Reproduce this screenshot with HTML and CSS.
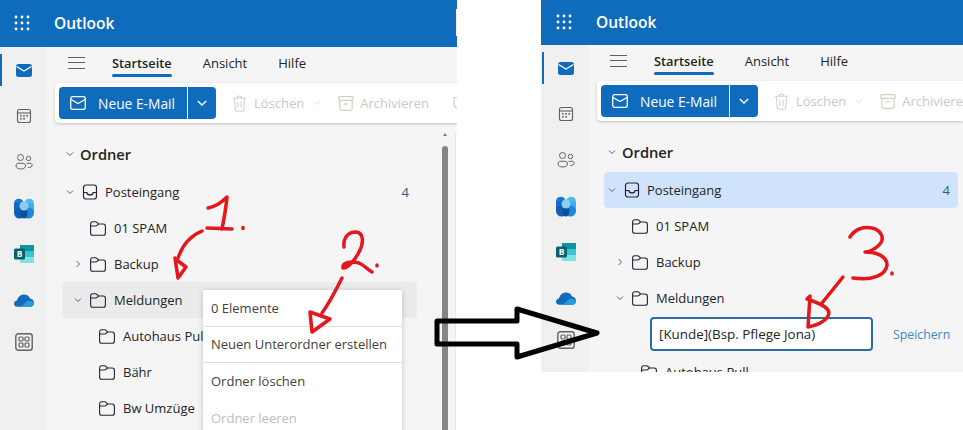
FILE: index.html
```html
<!DOCTYPE html>
<html lang="de">
<head>
<meta charset="utf-8">
<title>Outlook</title>
<link rel="stylesheet" href="styles.css">
</head>
<body>
<svg class="defs" width="0" height="0" aria-hidden="true">
  <symbol id="i-waffle" viewBox="0 0 16 16"><g fill="#fff"><circle cx="2" cy="2" r="1.4"/><circle cx="8" cy="2" r="1.4"/><circle cx="14" cy="2" r="1.4"/><circle cx="2" cy="8" r="1.4"/><circle cx="8" cy="8" r="1.4"/><circle cx="14" cy="8" r="1.4"/><circle cx="2" cy="14" r="1.4"/><circle cx="8" cy="14" r="1.4"/><circle cx="14" cy="14" r="1.4"/></g></symbol>
  <symbol id="i-mail" viewBox="0 0 16 13"><rect width="16" height="13" rx="2.5" fill="#0f6cbd"/><path d="M0.5 2.5 8 7l7.5-4.5" fill="none" stroke="#fff" stroke-width="1.3"/></symbol>
  <symbol id="i-cal" viewBox="0 0 16 16"><rect x="1.5" y="1.5" width="13" height="13" rx="2" fill="none" stroke="#616161" stroke-width="1.1"/><path d="M1.5 5h13" stroke="#616161" stroke-width="1.1"/><g fill="#616161"><rect x="4" y="7" width="1.6" height="1.6"/><rect x="7.2" y="7" width="1.6" height="1.6"/><rect x="10.4" y="7" width="1.6" height="1.6"/><rect x="4" y="10" width="1.6" height="1.6"/><rect x="7.2" y="10" width="1.6" height="1.6"/></g></symbol>
  <symbol id="i-people" viewBox="0 0 18 16"><g fill="none" stroke="#616161" stroke-width="1"><circle cx="5.5" cy="3.5" r="3"/><circle cx="13.5" cy="4.5" r="2.2"/><path d="M1 12c0-1.5.8-2.7 2-2.7h5.2c1.4 0 2.3 1.2 2.3 2.7 0 1.8-2.2 3-4.8 3S1 13.800 1 12z"/><path d="M11.500 9.300H15c1.200 0 2.200.8 2.200 1.900 0 1.500-1.700 2.300-4 2.300"/></g></symbol>
  <symbol id="i-copilot" viewBox="0 0 20 21"><circle cx="4.800" cy="5.500" r="4.800" fill="#1a78d2"/><circle cx="15.200" cy="5.500" r="4.800" fill="#4fbdf0"/><rect x="0" y="5" width="9" height="11" rx="3" fill="#1668c4"/><rect x="11" y="5" width="9" height="11" rx="3" fill="#3fb0ec"/><ellipse cx="5.500" cy="15" rx="5.500" ry="5.500" fill="#0f5fb5"/><ellipse cx="14.500" cy="15" rx="5.500" ry="5.500" fill="#1f86d8"/><ellipse cx="10" cy="15" rx="3.500" ry="5.500" fill="#0d4f9e"/><circle cx="10" cy="8" r="4.500" fill="#8ccdf0"/></symbol>
  <symbol id="i-bookings" viewBox="0 0 20 18"><rect x="6" y="0" width="14" height="6" fill="#12949e"/><rect x="6" y="6" width="14" height="6" fill="#37c6d0"/><rect x="6" y="12" width="14" height="6" fill="#7fe0e6"/><rect x="0" y="3.500" width="11" height="11" rx="1.500" fill="#04626e"/><text x="5.500" y="12" class="bookings-b">B</text></symbol>
  <symbol id="i-cloud" viewBox="0 0 20 13"><path d="M3.500 12.800C1.500 12.800 0 11.400 0 9.700 0 8 1.300 6.800 3 6.600 3.700 3 6.600.5 10 .5c2.800 0 5.100 1.600 6 4 2.200.2 4 2 4 4.200 0 2.300-1.800 4.100-4 4.100z" fill="#0f6cbd"/><path d="M7 12.800 12 8c1-1 2.500-1.400 4-1.200 2.300.3 4 1.700 4 3.200 0 1.600-1.500 2.800-4 2.800z" fill="#2a9be0"/></symbol>
  <symbol id="i-apps" viewBox="0 0 18 18"><rect x=".8" y=".8" width="16.400" height="16.400" rx="2.500" fill="none" stroke="#616161" stroke-width="1.400"/><g fill="none" stroke="#616161" stroke-width="1.200"><rect x="4" y="4" width="4" height="4" rx="1"/><rect x="10" y="4" width="4" height="4" rx="1"/><rect x="4" y="10" width="4" height="4" rx="1"/><rect x="10" y="10" width="4" height="4" rx="1"/></g></symbol>
  <symbol id="i-envelope" viewBox="0 0 16 14"><rect x=".7" y=".7" width="14.600" height="12.600" rx="2" fill="none" stroke="#fff" stroke-width="1.300"/><path d="M1 3.500 8 7.500l7-4" fill="none" stroke="#fff" stroke-width="1.300"/></symbol>
  <symbol id="i-chev" viewBox="0 0 10 10"><path d="M2 3.500 5 6.500l3-3" fill="none" stroke="currentColor" stroke-width="1"/></symbol>
  <symbol id="i-chevr" viewBox="0 0 10 10"><path d="M3.500 2 6.500 5l-3 3" fill="none" stroke="currentColor" stroke-width="1"/></symbol>
  <symbol id="i-trash" viewBox="0 0 16 18"><g fill="none" stroke="#cfcfcf" stroke-width="1.100"><path d="M1 3.500h14M5.500 3.500c0-1.500 1-2.500 2.500-2.500s2.500 1 2.500 2.500"/><path d="M2.500 3.500l1 12c.1 1 .8 1.700 1.800 1.700h5.400c1 0 1.700-.7 1.800-1.700l1-12"/><path d="M6.300 7v6.500M9.700 7v6.500"/></g></symbol>
  <symbol id="i-archive" viewBox="0 0 16 15"><g fill="none" stroke="#ccd6bb" stroke-width="1.200"><rect x=".7" y=".7" width="14.600" height="3.600" rx="1"/><path d="M1.800 4.300v8.200c0 1 .7 1.800 1.700 1.800h9c1 0 1.700-.8 1.700-1.800V4.300"/><path d="M6 8h4"/></g></symbol>
  <symbol id="i-shield" viewBox="0 0 16 15"><path d="M1 1.500h14v6c0 3.500-3 5.800-7 6.800-4-1-7-3.300-7-6.800z" fill="none" stroke="#e6c9c9" stroke-width="1.200"/></symbol>
  <symbol id="i-inbox" viewBox="0 0 16 16"><rect x="1.500" y="1" width="13" height="14" rx="2.500" fill="none" stroke="#2b2035" stroke-width="1.200"/><path d="M1.500 8.500h3.200c.4 1.500 1.700 2.400 3.300 2.400s2.900-.9 3.300-2.400h3.200" fill="none" stroke="#2b2035" stroke-width="1.200"/></symbol>
  <symbol id="i-folder" viewBox="0 0 16 15"><path d="M.6 3C.6 1.600 1.500.7 2.800.7h2.700c.6 0 1 .2 1.400.6L8.600 3h4.600c1.300 0 2.200.9 2.200 2.200v6.800c0 1.300-.9 2.300-2.200 2.300H2.800c-1.300 0-2.200-1-2.200-2.300zM.6 5h4.900c.6 0 1.100-.2 1.500-.6L8.600 3" fill="none" stroke="#2b2035" stroke-width="1.100"/></symbol>
</svg>

<section class="win win-left">
  <header class="topbar">
    <svg class="waffle"><use href="#i-waffle"/></svg>
    <span class="brand">Outlook</span>
    <span class="search-edge"></span>
  </header>
  <div class="win-body">
    <nav class="rail">
      <span class="rail-item rail-active"><svg class="ic-mail"><use href="#i-mail"/></svg></span>
      <span class="rail-item"><svg class="ic-16"><use href="#i-cal"/></svg></span>
      <span class="rail-item"><svg class="ic-people"><use href="#i-people"/></svg></span>
      <span class="rail-item"><svg class="ic-20"><use href="#i-copilot"/></svg></span>
      <span class="rail-item"><svg class="ic-book"><use href="#i-bookings"/></svg></span>
      <span class="rail-item"><svg class="ic-cloud"><use href="#i-cloud"/></svg></span>
      <span class="rail-item rail-apps"><svg class="ic-apps"><use href="#i-apps"/></svg></span>
    </nav>
    <main class="main">
      <div class="tabs">
        <span class="burger"></span>
        <span class="tab tab-on">Startseite</span>
        <span class="tab">Ansicht</span>
        <span class="tab">Hilfe</span>
      </div>
      <div class="ribbon">
        <span class="btn-new"><svg class="ic-env"><use href="#i-envelope"/></svg>Neue E-Mail</span>
        <span class="btn-drop"><svg class="ic-drop"><use href="#i-chev"/></svg></span>
        <span class="cmd cmd-del"><svg class="ic-trash"><use href="#i-trash"/></svg>Löschen<svg class="ic-cmdchev"><use href="#i-chev"/></svg></span>
        <span class="cmd cmd-arc"><svg class="ic-arc"><use href="#i-archive"/></svg>Archivieren</span>
        <span class="cmd cmd-sh"><svg class="ic-arc"><use href="#i-shield"/></svg></span>
      </div>
      <div class="pane">
        <div class="tree">
          <div class="row row-head"><svg class="chev"><use href="#i-chev"/></svg><span>Ordner</span></div>
          <div class="row"><svg class="chev"><use href="#i-chev"/></svg><svg class="ic-inbox"><use href="#i-inbox"/></svg><span>Posteingang</span><span class="count">4</span></div>
          <div class="row lvl1"><span class="chev"></span><svg class="ic-folder"><use href="#i-folder"/></svg><span>01 SPAM</span></div>
          <div class="row lvl1"><svg class="chev"><use href="#i-chevr"/></svg><svg class="ic-folder"><use href="#i-folder"/></svg><span>Backup</span></div>
          <div class="row lvl1 row-hover"><svg class="chev"><use href="#i-chev"/></svg><svg class="ic-folder"><use href="#i-folder"/></svg><span>Meldungen</span></div>
          <div class="row lvl2"><span class="chev"></span><svg class="ic-folder"><use href="#i-folder"/></svg><span>Autohaus Pull</span></div>
          <div class="row lvl2"><span class="chev"></span><svg class="ic-folder"><use href="#i-folder"/></svg><span>Bähr</span></div>
          <div class="row lvl2"><span class="chev"></span><svg class="ic-folder"><use href="#i-folder"/></svg><span>Bw Umzüge</span></div>
        </div>
        <div class="scroll"><span class="scroll-up"></span><span class="scroll-thumb"></span></div>
        <div class="next-pane"></div>
      </div>
    </main>
  </div>
  <div class="menu">
    <div class="menu-item menu-sep">0 Elemente</div>
    <div class="menu-item menu-sep">Neuen Unterordner erstellen</div>
    <div class="menu-item">Ordner löschen</div>
    <div class="menu-item menu-off">Ordner leeren</div>
  </div>
</section>

<section class="win win-right">
  <header class="topbar">
    <svg class="waffle"><use href="#i-waffle"/></svg>
    <span class="brand">Outlook</span>
  </header>
  <div class="win-body">
    <nav class="rail">
      <span class="rail-item rail-active"><svg class="ic-mail"><use href="#i-mail"/></svg></span>
      <span class="rail-item"><svg class="ic-16"><use href="#i-cal"/></svg></span>
      <span class="rail-item"><svg class="ic-people"><use href="#i-people"/></svg></span>
      <span class="rail-item"><svg class="ic-20"><use href="#i-copilot"/></svg></span>
      <span class="rail-item"><svg class="ic-book"><use href="#i-bookings"/></svg></span>
      <span class="rail-item"><svg class="ic-cloud"><use href="#i-cloud"/></svg></span>
      <span class="rail-item rail-apps"><svg class="ic-apps"><use href="#i-apps"/></svg></span>
    </nav>
    <main class="main">
      <div class="tabs">
        <span class="burger"></span>
        <span class="tab tab-on">Startseite</span>
        <span class="tab">Ansicht</span>
        <span class="tab">Hilfe</span>
      </div>
      <div class="ribbon">
        <span class="btn-new"><svg class="ic-env"><use href="#i-envelope"/></svg>Neue E-Mail</span>
        <span class="btn-drop"><svg class="ic-drop"><use href="#i-chev"/></svg></span>
        <span class="cmd cmd-del"><svg class="ic-trash"><use href="#i-trash"/></svg>Löschen<svg class="ic-cmdchev"><use href="#i-chev"/></svg></span>
        <span class="cmd cmd-arc"><svg class="ic-arc"><use href="#i-archive"/></svg>Archivieren</span>
      </div>
      <div class="pane">
        <div class="tree">
          <div class="row row-head"><svg class="chev"><use href="#i-chev"/></svg><span>Ordner</span></div>
          <div class="row row-sel"><svg class="chev"><use href="#i-chev"/></svg><svg class="ic-inbox"><use href="#i-inbox"/></svg><span>Posteingang</span><span class="count">4</span></div>
          <div class="row lvl1"><span class="chev"></span><svg class="ic-folder"><use href="#i-folder"/></svg><span>01 SPAM</span></div>
          <div class="row lvl1"><svg class="chev"><use href="#i-chevr"/></svg><svg class="ic-folder"><use href="#i-folder"/></svg><span>Backup</span></div>
          <div class="row lvl1"><svg class="chev"><use href="#i-chev"/></svg><svg class="ic-folder"><use href="#i-folder"/></svg><span>Meldungen</span></div>
          <div class="row row-input"><span class="input">[Kunde](Bsp. Pflege Jona)</span><span class="save">Speichern</span></div>
          <div class="row lvl2"><span class="chev"></span><svg class="ic-folder"><use href="#i-folder"/></svg><span>Autohaus Pull</span></div>
        </div>
      </div>
    </main>
  </div>
</section>

<svg class="marks" viewBox="0 0 963 430" aria-hidden="true">
  <path class="black" d="M437 321H517V309L597 333 517 357V344H437Z"/>
  <g class="red">
    <path d="M208 208C214 207 222 202 227 197 226 208 224 219 222 229"/>
    <path d="M207 228 232 229"/>
    <path d="M243 227.500v1"/>
    <path d="M202 231C190 236 182 246 178 258"/>
    <path d="M175 258 178 278 186 267 178 261"/>
    <path d="M344 247C343 239 347 232 356 232 364 233 364 243 359 252 355 260 348 268 343 268 342 262 352 261 359 263 364 265 368 270 372 272"/>
    <path d="M377 265v1"/>
    <path d="M342 278C336 290 330 302 322 313"/>
    <path d="M310 312 330 319 312 332Z"/>
    <path d="M850 237C855 229 864 226 872 228 881 230 885 238 880 244 875 250 868 252 865 252 876 252 887 256 887 265 886 275 872 281 853 278"/>
    <path d="M892 273v1"/>
    <path d="M843 277 822 303"/>
    <path d="M807 299 810 296 808 327C815 326 825 322 828 316 832 309 822 304 807 299"/>
  </g>
</svg>
</body>
</html>
```

FILE: styles.css
```css
* { box-sizing: border-box; }
html, body { margin: 0; padding: 0; }
body {
  width: 963px;
  height: 430px;
  background: #fff;
  display: flex;
  align-items: flex-start;
  gap: 84px;
  overflow: hidden;
  position: relative;
  font-family: "Open Sans", "Noto Sans", sans-serif;
  font-size: 13px;
  color: #242424;
}
.defs { position: absolute; }
.bookings-b { font: 700 8.5px "Open Sans", sans-serif; fill: #fff; text-anchor: middle; }

.win { position: relative; display: flex; flex-direction: column; overflow: hidden; }
.win-left { width: 457px; height: 430px; }
.win-right { width: 422px; height: 372px; }

.topbar { height: 47px; flex: none; background: #0f6cbd; display: flex; align-items: center; position: relative; padding: 0 0 2px 14px; }
.win-right .topbar { height: 45px; padding-left: 15px; }
.waffle { width: 16px; height: 16px; margin-right: 24px; }
.brand { color: #fff; font-size: 15.5px; font-weight: 600; }
.search-edge { margin-left: auto; width: 1px; height: 27px; background: #f1f1f1; }

.win-body { flex: 1; display: flex; min-height: 0; }
.rail { width: 47px; flex: none; background: #f0f0f0; display: flex; flex-direction: column; }
.win-right .rail { width: 48px; padding-left: 1px; }
.rail-item { height: 46px; flex: none; display: flex; align-items: center; justify-content: center; position: relative; }
.rail-apps { height: 38px; }
.rail-active::before { content: ""; position: absolute; left: 0; top: 7px; width: 2px; height: 32px; background: #0f6cbd; }
.ic-mail { width: 16px; height: 13px; }
.ic-16 { width: 16px; height: 16px; }
.ic-people { width: 18px; height: 16px; }
.ic-20 { width: 20px; height: 21px; }
.ic-book { width: 20px; height: 18px; }
.ic-cloud { width: 20px; height: 13px; }
.ic-apps { width: 18px; height: 18px; }

.main { flex: 1; min-width: 0; background: #f5f5f5; display: flex; flex-direction: column; }
.tabs { height: 36px; flex: none; display: flex; align-items: center; gap: 31px; padding: 0 0 4px 21px; }
.burger { width: 17px; height: 12px; border-top: 1px solid #616161; border-bottom: 1px solid #616161; margin-right: -4px; position: relative; }
.burger::after { content: ""; position: absolute; left: 0; right: 0; top: 4px; height: 1px; background: #616161; }
.tab { font-size: 13px; position: relative; }
.tab-on { font-weight: 600; font-size: 12.800px; }
.tab-on::after { content: ""; position: absolute; left: 0; right: 0; top: 20px; height: 3px; border-radius: 2px; background: #0f6cbd; }

.ribbon { height: 40px; flex: none; margin-left: 8px; padding: 4px; background: #fff; border-radius: 4px 0 0 4px; box-shadow: 0 1px 3px rgba(0,0,0,.22); display: flex; align-items: center; color: #c8c8c8; white-space: nowrap; }
.btn-new { width: 128px; height: 32px; flex: none; background: #0f6cbd; color: #fff; border-radius: 4px 0 0 4px; display: flex; align-items: center; padding-left: 11px; gap: 12px; font-size: 13.800px; font-weight: 400; }
.ic-env { width: 16px; height: 14px; flex: none; }
.btn-drop { width: 28px; height: 32px; flex: none; margin-left: 1px; background: #0f6cbd; color: #fff; border-radius: 0 4px 4px 0; display: flex; align-items: center; justify-content: center; }
.ic-drop { width: 14px; height: 14px; }
.cmd { display: flex; align-items: center; font-size: 13px; flex: none; }
.cmd-del { margin-left: 16px; gap: 7px; }
.ic-trash { width: 15px; height: 17px; }
.ic-cmdchev { width: 10px; height: 10px; color: #dedede; margin-left: 1px; }
.cmd-arc { margin-left: 16px; gap: 6px; }
.ic-arc { width: 16px; height: 15px; }
.cmd-sh { margin-left: 24px; }

.pane { flex: 1; min-height: 0; display: flex; padding-top: 15px; }
.win-right .pane { padding-right: 5px; }
.tree { flex: 1; min-width: 0; margin-left: 15px; }
.win-left .tree { flex: none; width: 355px; }
.row { height: 36px; display: flex; align-items: center; border-radius: 4px; font-size: 13px; white-space: nowrap; }
.row-head { height: 32px; margin-bottom: 4px; font-size: 14.700px; font-weight: 600; }
.row-head .chev { margin-right: 2px; }
.chev { width: 16px; height: 10px; flex: none; color: #616161; }
.ic-inbox { width: 16px; height: 16px; margin: 0 7px 0 4px; flex: none; }
.ic-folder { width: 16px; height: 15px; margin: 0 8px 0 4px; flex: none; }
.lvl1 { padding-left: 8px; }
.lvl2 { padding-left: 17px; }
.row-hover { background: #ebebeb; }
.row-sel { background: #cfe4fa; }
.count { margin-left: auto; padding-right: 8px; color: #2b5a90; font-weight: 500; }
.row-input { padding-left: 46px; margin-bottom: 2px; }
.input { width: 223px; height: 34px; border: 2px solid #2b6ca3; border-radius: 4px; background: #fff; display: flex; align-items: center; padding-left: 7px; font-size: 13.400px; }
.save { margin-left: 20px; color: #3f86c6; font-size: 12.300px; }

.scroll { flex: none; width: 6px; margin-left: 25px; position: relative; margin-top: -15px; }
.scroll-up { position: absolute; left: 1px; top: 10px; border: 2px solid transparent; border-bottom: 3px solid #7a7a7a; border-top: 0; }
.scroll-thumb { position: absolute; left: 0; top: 23px; bottom: 0; width: 6px; border-radius: 3px 3px 0 0; background: #858585; }
.next-pane { flex: none; width: 2px; margin-left: 7px; margin-top: -5px; background: #fff; border-left: 1px solid #e6e6e6; }

.menu { position: absolute; left: 203px; top: 290px; width: 199px; background: #fff; box-shadow: 0 1px 6px rgba(0,0,0,.2); font-size: 13px; color: #424242; }
.menu-item { height: 36.500px; display: flex; align-items: center; padding-left: 8px; white-space: nowrap; }
.menu-sep { border-bottom: 1px solid #e0e0e0; }
.menu-off { color: #bdbdbd; }

.marks { position: absolute; left: 0; top: 0; width: 963px; height: 430px; pointer-events: none; }
.black { fill: none; stroke: #000; stroke-width: 5; stroke-linejoin: round; }
.red { fill: none; stroke: #e3171c; stroke-width: 3.500; stroke-linecap: round; stroke-linejoin: round; }
```
